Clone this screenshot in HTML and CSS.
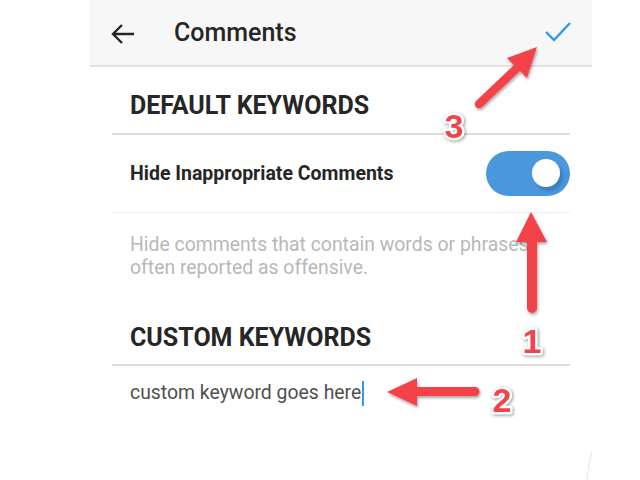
FILE: index.html
```html
<!DOCTYPE html>
<html lang="en">
<head>
    <meta charset="UTF-8">
    <meta name="viewport" content="width=device-width, initial-scale=1.0">
    <title>Comments</title>
    <link rel="stylesheet" href="styles.css">
</head>
<body>

    <div class="screen">
        <div class="topbar">
            <svg class="back" width="26" height="26" viewBox="0 0 26 26">
                <path d="M24 13H3M12 4L3 13l9 9" fill="none" stroke="#262626" stroke-width="2.4"/>
            </svg>
            <div class="title">Comments</div>
            <svg class="check" width="28" height="22" viewBox="0 0 28 22">
                <path d="M2 11l8 8L26 2" fill="none" stroke="#3897f0" stroke-width="2.4"/>
            </svg>
        </div>

        <div class="content">
            <div class="section-title first">Default Keywords</div>

            <div class="row">
                <div class="row-label">Hide Inappropriate Comments</div>
                <div class="toggle on"><span class="knob"></span></div>
            </div>

            <p class="hint">Hide comments that contain words or phrases<br>often reported as offensive.</p>

            <div class="section-title">Custom Keywords</div>

            <div class="keyword-input">custom keyword goes here<span class="caret"></span></div>
        </div>
    </div>

    <svg class="marks" width="640" height="480" viewBox="0 0 640 480">
        <defs>
            <filter id="shade" x="-30%" y="-30%" width="160%" height="160%">
                <feDropShadow dx="1" dy="2" stdDeviation="1.5" flood-color="#000" flood-opacity="0.35"/>
            </filter>
        </defs>
        <g fill="#f4424a" filter="url(#shade)">
            <!-- 3 -->
            <path d="M537 47L507 58l7 7-38 36a4 4 0 0 0 6 6l38-36 7 7z"/>
            <!-- 1 -->
            <path d="M531 212l-15 30h11v66a5 5 0 0 0 10 0v-66h10z"/>
            <!-- 2 -->
            <path d="M387 392l30-14v9h58a4.5 4.5 0 0 1 0 9h-58v10z"/>
        </g>
        <g class="num">
            <text x="454" y="138">3</text>
            <text x="532" y="353">1</text>
            <text x="502" y="412">2</text>
        </g>
        <path d="M592 452q-4 12-5 28" fill="none" stroke="#e4e4e4" stroke-width="1"/>
    </svg>

</body>
</html>
```

FILE: styles.css
```css
body {
    margin: 0;
    background: #fff;
    font-family: Roboto, "Noto Sans", sans-serif;
    width: 640px;
    height: 480px;
    overflow: hidden;
    position: relative;
}
.screen { margin-left: 90px; width: 502px; }

.topbar {
    height: 65px;
    background: #f7f7f7;
    border-bottom: 2px solid #e2e2e2;
    display: flex;
    align-items: center;
    padding: 0 20px;
}
.back { margin-top: 2px; }
.title {
    margin-left: 38px;
    font-size: 25px;
    font-weight: 500;
    color: #262626;
    flex: 1;
}
.check { margin-top: -2px; }

.content { padding: 0 22px; }

.section-title {
    padding: 46px 18px 13px;
    font-size: 25px;
    line-height: 26px;
    font-weight: 700;
    color: #262626;
    text-transform: uppercase;
    border-bottom: 2px solid #dcdcdc;
}
.section-title.first { padding-top: 26px; padding-bottom: 14px; }

.row {
    height: 77px;
    display: flex;
    align-items: center;
    justify-content: space-between;
    padding-left: 18px;
    border-bottom: 1px solid #efefef;
}
.row-label {
    font-size: 19.5px;
    font-weight: 700;
    color: #262626;
}
.toggle {
    width: 84px;
    height: 45px;
    border-radius: 23px;
    background: #4a97db;
    position: relative;
}
.knob {
    position: absolute;
    left: 46px;
    top: 8px;
    width: 28px;
    height: 28px;
    border-radius: 50%;
    background: #fff;
    box-shadow: 3px 4px 3px #3b7fc1;
}

.hint {
    margin: 0;
    padding: 20px 18px 0;
    font-size: 19.4px;
    line-height: 23px;
    color: #b8b8b8;
}

.keyword-input {
    padding: 14px 18px 0;
    font-size: 19.4px;
    line-height: 26px;
    color: #505050;
    display: flex;
    align-items: center;
}
.caret {
    width: 2px;
    height: 25px;
    background: #3897f0;
    margin-left: 1px;
}

.marks { position: absolute; left: 0; top: 0; }
.num text {
    font-family: "Liberation Sans", Arial, sans-serif;
    font-weight: 700;
    font-size: 34px;
    text-anchor: middle;
    fill: #f4424a;
    stroke: #fff;
    stroke-width: 5px;
    paint-order: stroke;
    stroke-linejoin: round;
    filter: drop-shadow(1px 1px 1.5px rgba(0,0,0,0.4));
}
```
